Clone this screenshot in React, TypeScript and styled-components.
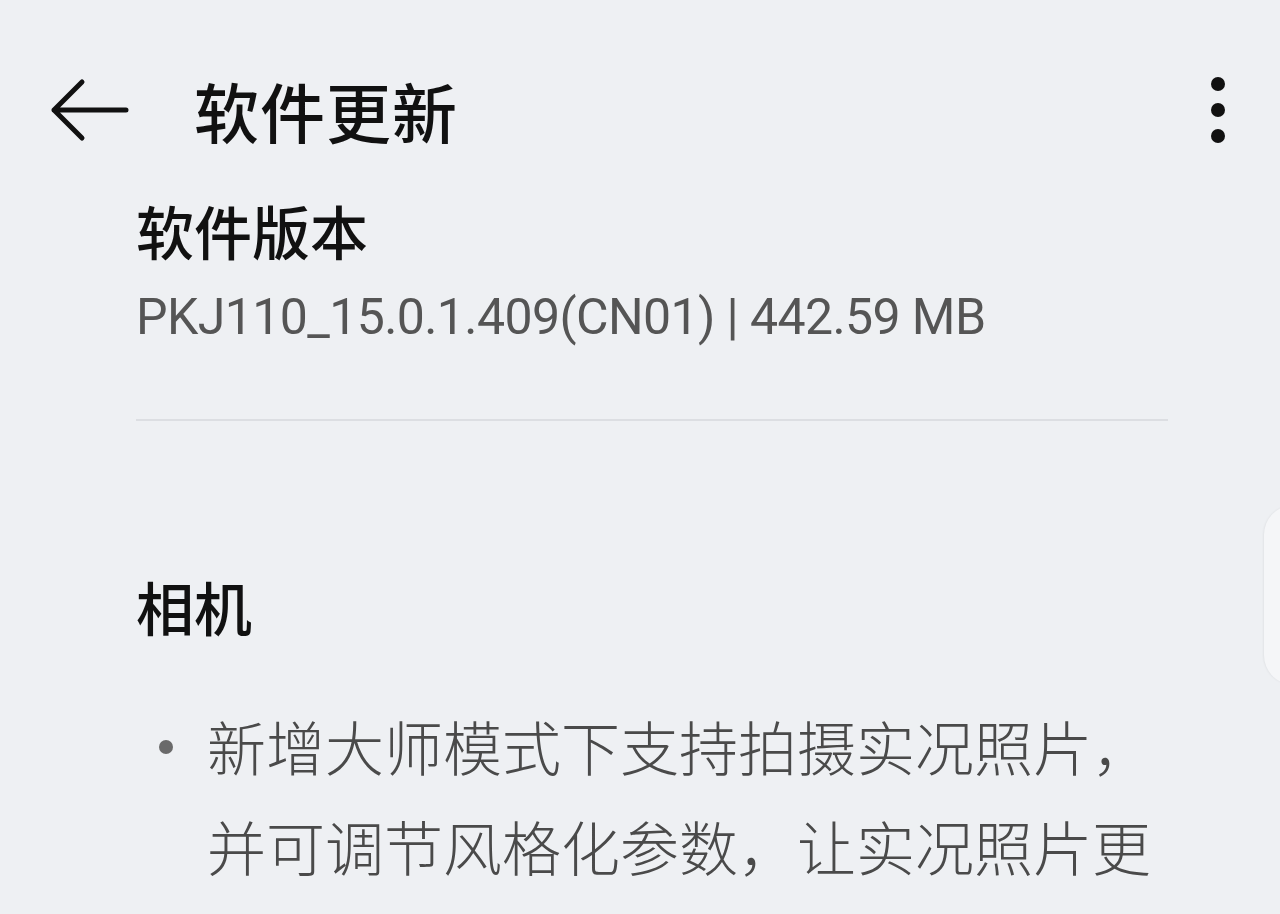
import React from 'react';
import styled, { createGlobalStyle } from 'styled-components';

const GlobalStyle = createGlobalStyle`
  html, body {
    margin: 0;
    padding: 0;
    background: #eef0f3;
  }
  body {
    font-family: "Noto Sans CJK SC", "Noto Sans", sans-serif;
    overflow: hidden;
  }
`;

const Screen = styled.div`
  position: relative;
  width: 1280px;
  height: 914px;
  overflow: hidden;
  background: #eef0f3;
`;

const Toolbar = styled.div`
  display: flex;
  align-items: center;
  height: 80px;
  margin-top: 70px;
  padding: 0 22px 0 50px;
`;

const IconButton = styled.div`
  display: flex;
  align-items: center;
  justify-content: center;
  width: 80px;
  height: 80px;
`;

const Title = styled.h1`
  flex: 1;
  margin: 0 0 0 64px;
  font-size: 65px;
  line-height: 80px;
  font-weight: 500;
  color: #111;
  letter-spacing: 1px;
`;

const Content = styled.div`
  padding: 0 112px 0 136px;
`;

const SectionTitle = styled.h2<{ $top: number }>`
  margin: ${p => p.$top}px 0 0;
  font-size: 58px;
  line-height: 70px;
  font-weight: 500;
  color: #111;
`;

const VersionLine = styled.div`
  margin-top: 21px;
  font-family: Roboto, "Noto Sans", sans-serif;
  font-size: 50px;
  line-height: 62px;
  letter-spacing: -0.6px;
  color: #555;
`;

const Divider = styled.hr`
  margin: 71px 0 0;
  border: none;
  height: 2px;
  background: #dcdee2;
`;

const Notes = styled.ul`
  margin: 55px 0 0;
  padding: 0;
  list-style: none;
`;

const Note = styled.li`
  position: relative;
  padding-left: 71px;
  font-size: 59px;
  line-height: 100px;
  font-weight: 300;
  color: #4a4a4a;

  &::before {
    content: "";
    position: absolute;
    left: 23px;
    top: 44px;
    width: 14px;
    height: 14px;
    border-radius: 50%;
    background: #6a6a6a;
  }
`;

const EdgeHandle = styled.div`
  position: absolute;
  right: -14px;
  top: 505px;
  width: 30px;
  height: 180px;
  border-radius: 30px 0 0 30px;
  background: #f5f6f8;
  box-shadow: -1px 0 2px rgba(0, 0, 0, 0.05);
`;

const BackArrow = () => (
  <svg width="80" height="66" viewBox="0 0 80 66" fill="none">
    <path d="M4 33 H76 M32 5 L4 33 L32 61" stroke="#111" strokeWidth="5" strokeLinecap="round" strokeLinejoin="round" />
  </svg>
);

const MoreIcon = () => (
  <svg width="20" height="70" viewBox="0 0 20 70">
    <circle cx="10" cy="9" r="7" fill="#111" />
    <circle cx="10" cy="35" r="7" fill="#111" />
    <circle cx="10" cy="61" r="7" fill="#111" />
  </svg>
);

const App: React.FC = () => {
  return (
    <Screen>
      <GlobalStyle />
      <Toolbar>
        <IconButton><BackArrow /></IconButton>
        <Title>软件更新</Title>
        <IconButton><MoreIcon /></IconButton>
      </Toolbar>
      <Content>
        <SectionTitle $top={45}>软件版本</SectionTitle>
        <VersionLine>PKJ110_15.0.1.409(CN01) | 442.59 MB</VersionLine>
        <Divider />
        <SectionTitle $top={150}>相机</SectionTitle>
        <Notes>
          <Note>新增大师模式下支持拍摄实况照片，并可调节风格化参数，让实况照片更</Note>
        </Notes>
      </Content>
      <EdgeHandle />
    </Screen>
  );
};

export default App;
